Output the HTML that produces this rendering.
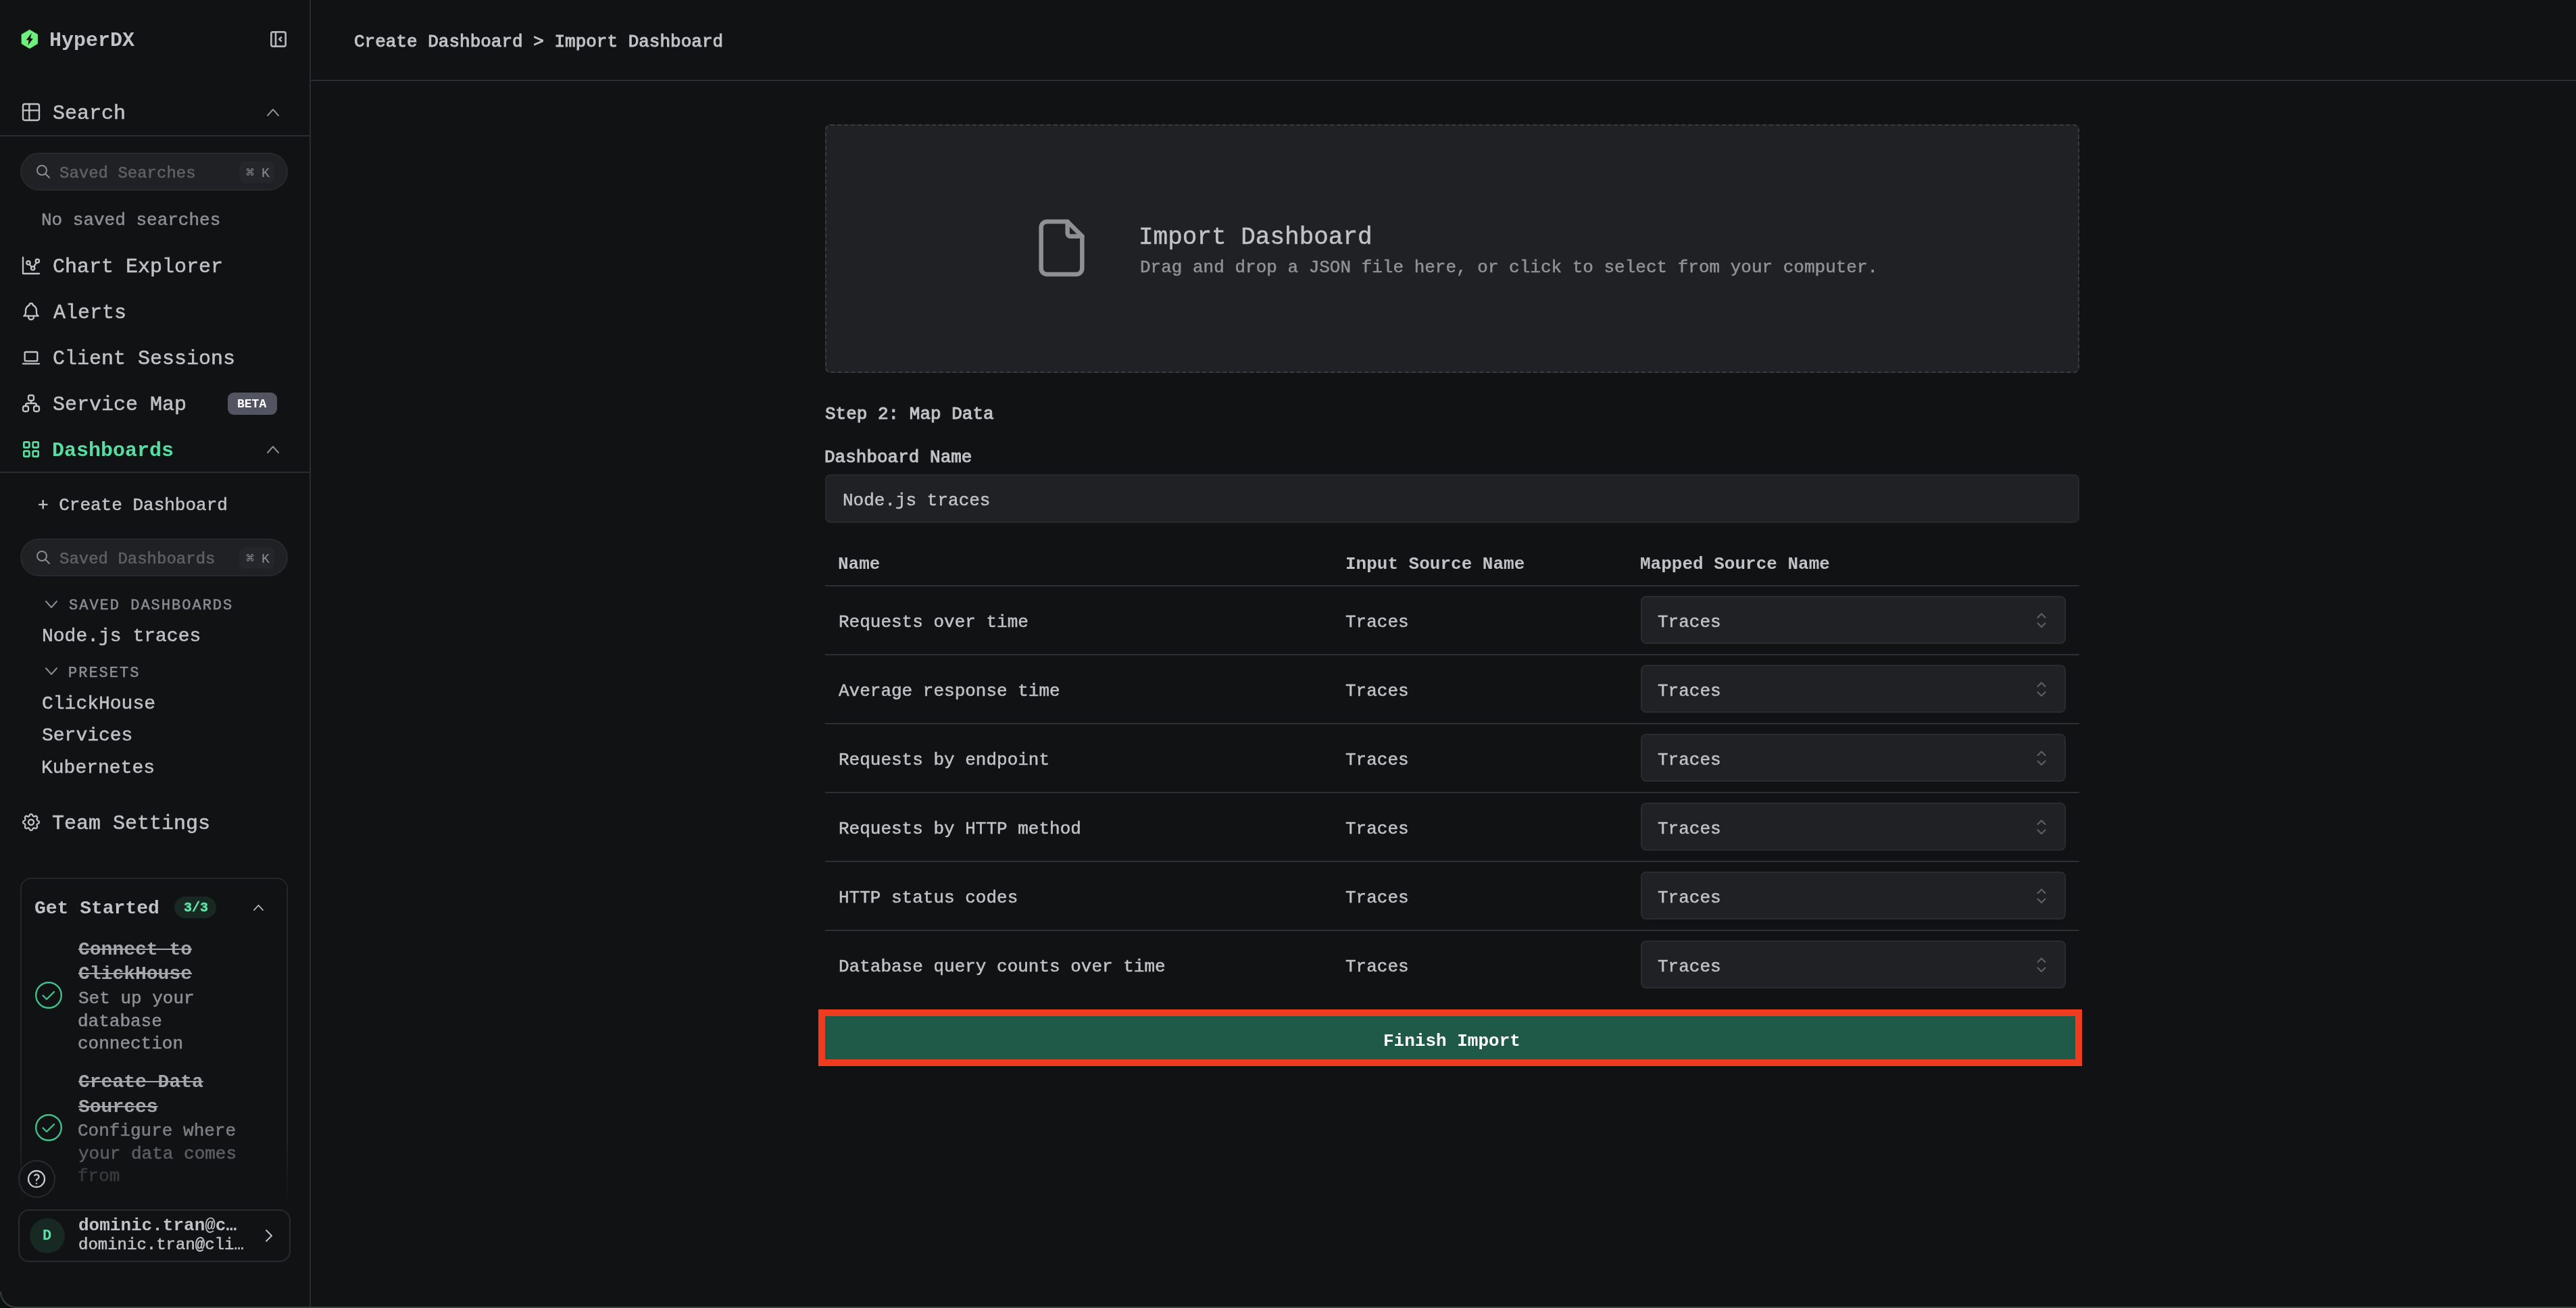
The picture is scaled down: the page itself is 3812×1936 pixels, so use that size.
<!DOCTYPE html>
<html><head><meta charset="utf-8"><title>HyperDX - Import Dashboard</title>
<style>
html,body{margin:0;padding:0;}
body{width:3812px;height:1936px;background:#111214;position:relative;overflow:hidden;font-family:"Liberation Mono",monospace;}
.t{position:absolute;white-space:pre;will-change:transform;}
.b{position:absolute;}
@media (max-width:2400px){html{zoom:0.5;}}
</style></head><body>
<div class="b" style="left:458px;top:0px;width:2px;height:1936px;background:#2b2c30"></div>
<div class="b" style="left:460px;top:118px;width:3352px;height:2px;background:#2b2c30"></div>
<svg class="b" style="left:26px;top:40px;" width="36" height="36" viewBox="0 0 36 36" fill="none" stroke-linecap="round" stroke-linejoin="round"><path d="M17.85 3.9 L29.9 10.95 V24.65 L17.85 31.9 L5.8 24.85 V11.05 Z" fill="#6fef7e" stroke="#6fef7e" stroke-width="0.3"/><path d="M20.9 8.8 L12.7 19.3 L16.6 19.6 L15.3 27.2 L22.8 17.2 L18.9 16.6 Z" fill="#111214" stroke="none"/></svg>
<div class="t" style="left:73.0px;top:43px;font-size:30px;line-height:34px;color:#c1c2c5;font-weight:700;">HyperDX</div>
<svg class="b" style="left:396px;top:42px;" width="32" height="32" viewBox="0 0 24 24" fill="none" stroke-linecap="round" stroke-linejoin="round"><g stroke="#b4b5bb" stroke-width="2"><rect x="4" y="4" width="16" height="16" rx="2"/><path d="M9 4v16"/><path d="M15 10l-2 2l2 2"/></g></svg>
<svg class="b" style="left:30px;top:150px;" width="32" height="32" viewBox="0 0 24 24" fill="none" stroke-linecap="round" stroke-linejoin="round"><g stroke="#c1c2c5" stroke-width="1.75"><rect x="3" y="3" width="18" height="18" rx="2"/><path d="M3 10h18"/><path d="M10 3v18"/></g></svg>
<div class="t" style="left:77.8px;top:151px;font-size:30px;line-height:34px;color:#c1c2c5;-webkit-text-stroke:0.5px #c1c2c5;">Search</div>
<svg class="b" style="left:394.0px;top:159.5px;" width="20" height="13" viewBox="0 0 20 13" fill="none" stroke-linecap="round" stroke-linejoin="round"><path d="M2 11 L10.0 2 L18 11" stroke="#8b8d93" stroke-width="2"/></svg>
<div class="b" style="left:0px;top:200px;width:458px;height:2px;background:#2b2c30"></div>
<div class="b" style="left:30px;top:226px;width:396px;height:56px;background:#202125;border:2px solid #28292d;border-radius:28px;box-sizing:border-box"></div>
<svg class="b" style="left:52px;top:242px;" width="24" height="24" viewBox="0 0 24 24" fill="none" stroke-linecap="round" stroke-linejoin="round"><g stroke="#8b8d93" stroke-width="2"><circle cx="10" cy="10" r="7"/><path d="M21 21l-6-6"/></g></svg>
<div class="t" style="left:88.1px;top:243px;font-size:24px;line-height:27px;color:#5f6167;-webkit-text-stroke:0.5px #5f6167;">Saved Searches</div>
<div class="b" style="left:354px;top:239px;width:52px;height:32px;background:#25262b;border-radius:8px"></div>
<div class="t" style="left:364.0px;top:245px;font-size:20px;line-height:23px;color:#8b8d93;font-family:"Liberation Sans",sans-serif;">⌘</div>
<div class="t" style="left:387.4px;top:245px;font-size:20px;line-height:23px;color:#8b8d93;font-family:"Liberation Sans",sans-serif;">K</div>
<div class="t" style="left:61.4px;top:311px;font-size:26px;line-height:30px;color:#8d8f94;-webkit-text-stroke:0.5px #8d8f94;">No saved searches</div>
<svg class="b" style="left:30px;top:377px;" width="32" height="32" viewBox="0 0 24 24" fill="none" stroke-linecap="round" stroke-linejoin="round"><g stroke="#c1c2c5" stroke-width="1.75"><path d="M3 3v18h18"/><circle cx="9" cy="9" r="2"/><circle cx="19" cy="7" r="2"/><circle cx="14" cy="15" r="2"/><path d="M10.16 10.62l2.34 2.88"/><path d="M15.088 13.328l2.837-4.586"/></g></svg>
<div class="t" style="left:77.9px;top:378px;font-size:30px;line-height:34px;color:#c1c2c5;-webkit-text-stroke:0.5px #c1c2c5;">Chart Explorer</div>
<svg class="b" style="left:30px;top:445px;" width="32" height="32" viewBox="0 0 24 24" fill="none" stroke-linecap="round" stroke-linejoin="round"><g stroke="#c1c2c5" stroke-width="1.75"><path d="M10 5a2 2 0 1 1 4 0a7 7 0 0 1 4 6v3a4 4 0 0 0 2 3h-16a4 4 0 0 0 2-3v-3a7 7 0 0 1 4-6"/><path d="M9 17v1a3 3 0 0 0 6 0v-1"/></g></svg>
<div class="t" style="left:78.6px;top:446px;font-size:30px;line-height:34px;color:#c1c2c5;-webkit-text-stroke:0.5px #c1c2c5;">Alerts</div>
<svg class="b" style="left:30px;top:513px;" width="32" height="32" viewBox="0 0 24 24" fill="none" stroke-linecap="round" stroke-linejoin="round"><g stroke="#c1c2c5" stroke-width="1.75"><path d="M3 19l18 0"/><path d="M5 7a1 1 0 0 1 1-1h12a1 1 0 0 1 1 1v8a1 1 0 0 1-1 1h-12a1 1 0 0 1-1-1z"/></g></svg>
<div class="t" style="left:77.9px;top:514px;font-size:30px;line-height:34px;color:#c1c2c5;-webkit-text-stroke:0.5px #c1c2c5;">Client Sessions</div>
<svg class="b" style="left:30px;top:581px;" width="32" height="32" viewBox="0 0 24 24" fill="none" stroke-linecap="round" stroke-linejoin="round"><g stroke="#c1c2c5" stroke-width="1.75"><path d="M3 17a2 2 0 0 1 2-2h2a2 2 0 0 1 2 2v2a2 2 0 0 1-2 2h-2a2 2 0 0 1-2-2z"/><path d="M15 17a2 2 0 0 1 2-2h2a2 2 0 0 1 2 2v2a2 2 0 0 1-2 2h-2a2 2 0 0 1-2-2z"/><path d="M9 5a2 2 0 0 1 2-2h2a2 2 0 0 1 2 2v2a2 2 0 0 1-2 2h-2a2 2 0 0 1-2-2z"/><path d="M6 15v-1a2 2 0 0 1 2-2h8a2 2 0 0 1 2 2v1"/><path d="M12 9l0 3"/></g></svg>
<div class="t" style="left:77.7px;top:582px;font-size:30px;line-height:34px;color:#c1c2c5;-webkit-text-stroke:0.5px #c1c2c5;">Service Map</div>
<div class="b" style="left:337px;top:581px;width:73px;height:33px;background:#525462;border-radius:9px"></div>
<div class="t" style="left:351.3px;top:588px;font-size:18px;line-height:20px;color:#ffffff;font-weight:700;font-family:"Liberation Sans",sans-serif;">BETA</div>
<svg class="b" style="left:30px;top:649px;" width="32" height="32" viewBox="0 0 24 24" fill="none" stroke-linecap="round" stroke-linejoin="round"><g stroke="#56dea2" stroke-width="2"><rect x="4" y="4" width="6" height="6" rx="1"/><rect x="14" y="4" width="6" height="6" rx="1"/><rect x="4" y="14" width="6" height="6" rx="1"/><rect x="14" y="14" width="6" height="6" rx="1"/></g></svg>
<div class="t" style="left:76.9px;top:650px;font-size:30px;line-height:34px;color:#56dea2;font-weight:700;">Dashboards</div>
<svg class="b" style="left:394.0px;top:658.5px;" width="20" height="13" viewBox="0 0 20 13" fill="none" stroke-linecap="round" stroke-linejoin="round"><path d="M2 11 L10.0 2 L18 11" stroke="#8b8d93" stroke-width="2"/></svg>
<div class="b" style="left:0px;top:698px;width:458px;height:2px;background:#2b2c30"></div>
<div class="t" style="left:55.5px;top:733px;font-size:26px;line-height:30px;color:#c1c2c5;-webkit-text-stroke:0.5px #c1c2c5;">+ Create Dashboard</div>
<div class="b" style="left:30px;top:797px;width:396px;height:56px;background:#202125;border:2px solid #28292d;border-radius:28px;box-sizing:border-box"></div>
<svg class="b" style="left:52px;top:813px;" width="24" height="24" viewBox="0 0 24 24" fill="none" stroke-linecap="round" stroke-linejoin="round"><g stroke="#8b8d93" stroke-width="2"><circle cx="10" cy="10" r="7"/><path d="M21 21l-6-6"/></g></svg>
<div class="t" style="left:87.8px;top:814px;font-size:24px;line-height:27px;color:#5f6167;-webkit-text-stroke:0.5px #5f6167;">Saved Dashboards</div>
<div class="b" style="left:354px;top:810px;width:52px;height:32px;background:#25262b;border-radius:8px"></div>
<div class="t" style="left:364.0px;top:816px;font-size:20px;line-height:23px;color:#8b8d93;font-family:"Liberation Sans",sans-serif;">⌘</div>
<div class="t" style="left:387.4px;top:816px;font-size:20px;line-height:23px;color:#8b8d93;font-family:"Liberation Sans",sans-serif;">K</div>
<svg class="b" style="left:66.0px;top:887.5px;" width="20" height="13" viewBox="0 0 20 13" fill="none" stroke-linecap="round" stroke-linejoin="round"><path d="M2 2 L10.0 11 L18 2" stroke="#8b8d93" stroke-width="2"/></svg>
<div class="t" style="left:101.6px;top:884px;font-size:22px;line-height:25px;color:#8b8d93;-webkit-text-stroke:0.5px #8b8d93;letter-spacing:2px;">SAVED DASHBOARDS</div>
<div class="t" style="left:61.6px;top:926px;font-size:28px;line-height:31px;color:#c1c2c5;-webkit-text-stroke:0.5px #c1c2c5;">Node.js traces</div>
<svg class="b" style="left:66.0px;top:987.0px;" width="20" height="13" viewBox="0 0 20 13" fill="none" stroke-linecap="round" stroke-linejoin="round"><path d="M2 2 L10.0 11 L18 2" stroke="#8b8d93" stroke-width="2"/></svg>
<div class="t" style="left:100.7px;top:984px;font-size:22px;line-height:25px;color:#8b8d93;-webkit-text-stroke:0.5px #8b8d93;letter-spacing:2px;">PRESETS</div>
<div class="t" style="left:61.5px;top:1026px;font-size:28px;line-height:31px;color:#c1c2c5;-webkit-text-stroke:0.5px #c1c2c5;">ClickHouse</div>
<div class="t" style="left:61.9px;top:1073px;font-size:28px;line-height:31px;color:#c1c2c5;-webkit-text-stroke:0.5px #c1c2c5;">Services</div>
<div class="t" style="left:60.8px;top:1121px;font-size:28px;line-height:31px;color:#c1c2c5;-webkit-text-stroke:0.5px #c1c2c5;">Kubernetes</div>
<svg class="b" style="left:30px;top:1201px;" width="32" height="32" viewBox="0 0 24 24" fill="none" stroke-linecap="round" stroke-linejoin="round"><g stroke="#c1c2c5" stroke-width="1.75"><path d="M10.325 4.317c.426-1.756 2.924-1.756 3.35 0a1.724 1.724 0 0 0 2.573 1.066c1.543-.94 3.31.826 2.37 2.37a1.724 1.724 0 0 0 1.065 2.572c1.756.426 1.756 2.924 0 3.35a1.724 1.724 0 0 0-1.066 2.573c.94 1.543-.826 3.31-2.37 2.37a1.724 1.724 0 0 0-2.572 1.065c-.426 1.756-2.924 1.756-3.35 0a1.724 1.724 0 0 0-2.573-1.066c-1.543.94-3.31-.826-2.37-2.37a1.724 1.724 0 0 0-1.065-2.572c-1.756-.426-1.756-2.924 0-3.35a1.724 1.724 0 0 0 1.066-2.573c-.94-1.543.826-3.31 2.37-2.37c1 .608 2.296.07 2.572-1.065z"/><path d="M9 12a3 3 0 1 0 6 0a3 3 0 0 0-6 0"/></g></svg>
<div class="t" style="left:77.2px;top:1202px;font-size:30px;line-height:34px;color:#c1c2c5;-webkit-text-stroke:0.5px #c1c2c5;">Team Settings</div>
<div class="b" style="left:30px;top:1299px;width:396px;height:520px;border:2px solid #26272b;border-bottom:none;border-radius:16px 16px 0 0;box-sizing:border-box;-webkit-mask-image:linear-gradient(to bottom,#000 0,#000 380px,transparent 490px)"></div>
<div class="t" style="left:51.3px;top:1329px;font-size:28px;line-height:31px;color:#c1c2c5;font-weight:700;">Get Started</div>
<div class="b" style="left:258px;top:1327px;width:62px;height:32px;background:#182822;border-radius:16px"></div>
<div class="t" style="left:271.6px;top:1332px;font-size:20px;line-height:23px;color:#62e4aa;font-weight:700;-webkit-text-stroke:0.4px #62e4aa;">3/3</div>
<svg class="b" style="left:373.5px;top:1337.5px;" width="17" height="11" viewBox="0 0 17 11" fill="none" stroke-linecap="round" stroke-linejoin="round"><path d="M2 9 L8.5 2 L15 9" stroke="#c1c2c5" stroke-width="1.8"/></svg>
<svg class="b" style="left:52px;top:1453px;" width="40" height="40" viewBox="0 0 40 40" fill="none" stroke-linecap="round" stroke-linejoin="round"><circle cx="20" cy="20" r="18.8" stroke="#3fc08a" stroke-width="2.4"/><path d="M11.5 20.5 L17 26 L28 15" stroke="#3fc08a" stroke-width="2.4"/></svg>
<div class="t" style="left:115.5px;top:1390px;font-size:28px;line-height:31px;color:#a5a7ab;font-weight:700;text-decoration:line-through;">Connect to</div>
<div class="t" style="left:115.5px;top:1426px;font-size:28px;line-height:31px;color:#a5a7ab;font-weight:700;text-decoration:line-through;">ClickHouse</div>
<div class="t" style="left:115.6px;top:1463px;font-size:26px;line-height:30px;color:#8f9196;-webkit-text-stroke:0.5px #8f9196;">Set up your</div>
<div class="t" style="left:114.8px;top:1497px;font-size:26px;line-height:30px;color:#8f9196;-webkit-text-stroke:0.5px #8f9196;">database</div>
<div class="t" style="left:114.9px;top:1530px;font-size:26px;line-height:30px;color:#8f9196;-webkit-text-stroke:0.5px #8f9196;">connection</div>
<svg class="b" style="left:52px;top:1649px;" width="40" height="40" viewBox="0 0 40 40" fill="none" stroke-linecap="round" stroke-linejoin="round"><circle cx="20" cy="20" r="18.8" stroke="#3fc08a" stroke-width="2.4"/><path d="M11.5 20.5 L17 26 L28 15" stroke="#3fc08a" stroke-width="2.4"/></svg>
<div class="t" style="left:115.6px;top:1586px;font-size:28px;line-height:31px;color:#a5a7ab;font-weight:700;text-decoration:line-through;">Create Data</div>
<div class="t" style="left:116.2px;top:1623px;font-size:28px;line-height:31px;color:#a5a7ab;font-weight:700;text-decoration:line-through;">Sources</div>
<div class="t" style="left:115.3px;top:1659px;font-size:26px;line-height:30px;color:#7d7f84;-webkit-text-stroke:0.5px #7d7f84;">Configure where</div>
<div class="t" style="left:115.9px;top:1693px;font-size:26px;line-height:30px;color:#5d5f63;-webkit-text-stroke:0.5px #5d5f63;">your data comes</div>
<div class="t" style="left:114.9px;top:1726px;font-size:26px;line-height:30px;color:#3a3b3e;-webkit-text-stroke:0.5px #3a3b3e;">from</div>
<div class="b" style="left:27px;top:1717px;width:55px;height:56px;background:#111214;border:2px solid #2a2b2f;border-radius:50%;box-sizing:border-box"></div>
<svg class="b" style="left:38px;top:1729px;" width="32" height="32" viewBox="0 0 24 24" fill="none" stroke-linecap="round" stroke-linejoin="round"><g stroke="#c9cacd" stroke-width="1.75"><circle cx="12" cy="12" r="9"/><path d="M12 17l0 .01"/><path d="M12 13.5a1.5 1.5 0 0 1 1-1.5a2.6 2.6 0 1 0-3-4"/></g></svg>
<div class="b" style="left:27px;top:1790px;width:403px;height:78px;border:2px solid #2a2b2f;border-radius:16px;box-sizing:border-box"></div>
<div class="b" style="left:44px;top:1803px;width:52px;height:52px;background:#182822;border-radius:50%"></div>
<div class="t" style="left:62.5px;top:1817px;font-size:22px;line-height:25px;color:#5fe0a6;font-weight:700;">D</div>
<div class="t" style="left:115.5px;top:1799px;font-size:26px;line-height:30px;color:#c1c2c5;font-weight:700;">dominic.tran@c…</div>
<div class="t" style="left:115.9px;top:1829px;font-size:24px;line-height:27px;color:#c1c2c5;-webkit-text-stroke:0.5px #c1c2c5;">dominic.tran@cli…</div>
<svg class="b" style="left:390px;top:1818px;" width="16" height="22" viewBox="0 0 16 22" fill="none" stroke-linecap="round" stroke-linejoin="round"><path d="M4 3 L12 11 L4 19" stroke="#c1c2c5" stroke-width="2"/></svg>
<div class="b" style="left:0px;top:1934px;width:3812px;height:2px;background:#3d3e40"></div>
<svg class="b" style="left:0px;top:1900px;" width="40" height="36" viewBox="0 0 40 36" fill="none" stroke-linecap="round" stroke-linejoin="round"><path d="M0 12 A24 24 0 0 0 24 36 H0 Z" fill="#0a120c" stroke="none"/><path d="M1 12 A23 23 0 0 0 24 35 H40" stroke="#3d3e40" stroke-width="2" stroke-linecap="butt"/></svg>
<div class="t" style="left:523.6px;top:47px;font-size:26px;line-height:30px;color:#c1c2c5;-webkit-text-stroke:1.0px #c1c2c5;">Create Dashboard &gt; Import Dashboard</div>
<div class="b" style="left:1221px;top:184px;width:1856px;height:368px;background:#202125;border:2px dashed #3a3b40;border-radius:8px;box-sizing:border-box"></div>
<svg class="b" style="left:1518.6px;top:315.3px;" width="104" height="104" viewBox="0 0 24 24" fill="none" stroke-linecap="round" stroke-linejoin="round"><g stroke="#8f9094" stroke-width="1.5"><path d="M14 3v4a1 1 0 0 0 1 1h4"/><path d="M17 21h-10a2 2 0 0 1-2-2v-14a2 2 0 0 1 2-2h7l5 5v11a2 2 0 0 1-2 2z"/></g></svg>
<div class="t" style="left:1685.4px;top:331px;font-size:36px;line-height:41px;color:#c1c2c5;-webkit-text-stroke:0.5px #c1c2c5;">Import Dashboard</div>
<div class="t" style="left:1686.9px;top:381px;font-size:26px;line-height:30px;color:#909296;-webkit-text-stroke:0.5px #909296;">Drag and drop a JSON file here, or click to select from your computer.</div>
<div class="t" style="left:1221.0px;top:598px;font-size:26px;line-height:30px;color:#c1c2c5;-webkit-text-stroke:1.0px #c1c2c5;">Step 2: Map Data</div>
<div class="t" style="left:1220.4px;top:662px;font-size:26px;line-height:30px;color:#c1c2c5;-webkit-text-stroke:1.0px #c1c2c5;">Dashboard Name</div>
<div class="b" style="left:1221px;top:702px;width:1856px;height:72px;background:#202125;border:2px solid #27282c;border-radius:8px;box-sizing:border-box"></div>
<div class="t" style="left:1246.9px;top:726px;font-size:26px;line-height:30px;color:#c1c2c5;-webkit-text-stroke:0.5px #c1c2c5;">Node.js traces</div>
<div class="t" style="left:1240.3px;top:820px;font-size:26px;line-height:30px;color:#c1c2c5;font-weight:700;">Name</div>
<div class="t" style="left:1990.5px;top:820px;font-size:26px;line-height:30px;color:#c1c2c5;font-weight:700;">Input Source Name</div>
<div class="t" style="left:2427.2px;top:820px;font-size:26px;line-height:30px;color:#c1c2c5;font-weight:700;">Mapped Source Name</div>
<div class="b" style="left:1221px;top:866px;width:1856px;height:2px;background:#2e2f34"></div>
<div class="t" style="left:1240.9px;top:906px;font-size:26px;line-height:30px;color:#c1c2c5;-webkit-text-stroke:0.5px #c1c2c5;">Requests over time</div>
<div class="t" style="left:1990.5px;top:906px;font-size:26px;line-height:30px;color:#c1c2c5;-webkit-text-stroke:0.5px #c1c2c5;">Traces</div>
<div class="b" style="left:2428px;top:882px;width:629px;height:71px;background:#202125;border:2px solid #2a2b30;border-radius:8px;box-sizing:border-box"></div>
<div class="t" style="left:2453.2px;top:906px;font-size:26px;line-height:30px;color:#c1c2c5;-webkit-text-stroke:0.5px #c1c2c5;">Traces</div>
<svg class="b" style="left:3009px;top:902px;" width="24" height="32" viewBox="0 0 24 32" fill="none" stroke-linecap="round" stroke-linejoin="round"><path d="M6.5 12 L12 6.5 L17.5 12" stroke="#5d5f67" stroke-width="2.2"/><path d="M6.5 20.5 L12 26 L17.5 20.5" stroke="#5d5f67" stroke-width="2.2"/></svg>
<div class="b" style="left:1221px;top:968px;width:1856px;height:2px;background:#2e2f34"></div>
<div class="t" style="left:1240.9px;top:1008px;font-size:26px;line-height:30px;color:#c1c2c5;-webkit-text-stroke:0.5px #c1c2c5;">Average response time</div>
<div class="t" style="left:1990.5px;top:1008px;font-size:26px;line-height:30px;color:#c1c2c5;-webkit-text-stroke:0.5px #c1c2c5;">Traces</div>
<div class="b" style="left:2428px;top:984px;width:629px;height:71px;background:#202125;border:2px solid #2a2b30;border-radius:8px;box-sizing:border-box"></div>
<div class="t" style="left:2453.2px;top:1008px;font-size:26px;line-height:30px;color:#c1c2c5;-webkit-text-stroke:0.5px #c1c2c5;">Traces</div>
<svg class="b" style="left:3009px;top:1004px;" width="24" height="32" viewBox="0 0 24 32" fill="none" stroke-linecap="round" stroke-linejoin="round"><path d="M6.5 12 L12 6.5 L17.5 12" stroke="#5d5f67" stroke-width="2.2"/><path d="M6.5 20.5 L12 26 L17.5 20.5" stroke="#5d5f67" stroke-width="2.2"/></svg>
<div class="b" style="left:1221px;top:1070px;width:1856px;height:2px;background:#2e2f34"></div>
<div class="t" style="left:1240.9px;top:1110px;font-size:26px;line-height:30px;color:#c1c2c5;-webkit-text-stroke:0.5px #c1c2c5;">Requests by endpoint</div>
<div class="t" style="left:1990.5px;top:1110px;font-size:26px;line-height:30px;color:#c1c2c5;-webkit-text-stroke:0.5px #c1c2c5;">Traces</div>
<div class="b" style="left:2428px;top:1086px;width:629px;height:71px;background:#202125;border:2px solid #2a2b30;border-radius:8px;box-sizing:border-box"></div>
<div class="t" style="left:2453.2px;top:1110px;font-size:26px;line-height:30px;color:#c1c2c5;-webkit-text-stroke:0.5px #c1c2c5;">Traces</div>
<svg class="b" style="left:3009px;top:1106px;" width="24" height="32" viewBox="0 0 24 32" fill="none" stroke-linecap="round" stroke-linejoin="round"><path d="M6.5 12 L12 6.5 L17.5 12" stroke="#5d5f67" stroke-width="2.2"/><path d="M6.5 20.5 L12 26 L17.5 20.5" stroke="#5d5f67" stroke-width="2.2"/></svg>
<div class="b" style="left:1221px;top:1172px;width:1856px;height:2px;background:#2e2f34"></div>
<div class="t" style="left:1240.9px;top:1212px;font-size:26px;line-height:30px;color:#c1c2c5;-webkit-text-stroke:0.5px #c1c2c5;">Requests by HTTP method</div>
<div class="t" style="left:1990.5px;top:1212px;font-size:26px;line-height:30px;color:#c1c2c5;-webkit-text-stroke:0.5px #c1c2c5;">Traces</div>
<div class="b" style="left:2428px;top:1188px;width:629px;height:71px;background:#202125;border:2px solid #2a2b30;border-radius:8px;box-sizing:border-box"></div>
<div class="t" style="left:2453.2px;top:1212px;font-size:26px;line-height:30px;color:#c1c2c5;-webkit-text-stroke:0.5px #c1c2c5;">Traces</div>
<svg class="b" style="left:3009px;top:1208px;" width="24" height="32" viewBox="0 0 24 32" fill="none" stroke-linecap="round" stroke-linejoin="round"><path d="M6.5 12 L12 6.5 L17.5 12" stroke="#5d5f67" stroke-width="2.2"/><path d="M6.5 20.5 L12 26 L17.5 20.5" stroke="#5d5f67" stroke-width="2.2"/></svg>
<div class="b" style="left:1221px;top:1274px;width:1856px;height:2px;background:#2e2f34"></div>
<div class="t" style="left:1240.9px;top:1314px;font-size:26px;line-height:30px;color:#c1c2c5;-webkit-text-stroke:0.5px #c1c2c5;">HTTP status codes</div>
<div class="t" style="left:1990.5px;top:1314px;font-size:26px;line-height:30px;color:#c1c2c5;-webkit-text-stroke:0.5px #c1c2c5;">Traces</div>
<div class="b" style="left:2428px;top:1290px;width:629px;height:71px;background:#202125;border:2px solid #2a2b30;border-radius:8px;box-sizing:border-box"></div>
<div class="t" style="left:2453.2px;top:1314px;font-size:26px;line-height:30px;color:#c1c2c5;-webkit-text-stroke:0.5px #c1c2c5;">Traces</div>
<svg class="b" style="left:3009px;top:1310px;" width="24" height="32" viewBox="0 0 24 32" fill="none" stroke-linecap="round" stroke-linejoin="round"><path d="M6.5 12 L12 6.5 L17.5 12" stroke="#5d5f67" stroke-width="2.2"/><path d="M6.5 20.5 L12 26 L17.5 20.5" stroke="#5d5f67" stroke-width="2.2"/></svg>
<div class="b" style="left:1221px;top:1376px;width:1856px;height:2px;background:#2e2f34"></div>
<div class="t" style="left:1240.9px;top:1416px;font-size:26px;line-height:30px;color:#c1c2c5;-webkit-text-stroke:0.5px #c1c2c5;">Database query counts over time</div>
<div class="t" style="left:1990.5px;top:1416px;font-size:26px;line-height:30px;color:#c1c2c5;-webkit-text-stroke:0.5px #c1c2c5;">Traces</div>
<div class="b" style="left:2428px;top:1392px;width:629px;height:71px;background:#202125;border:2px solid #2a2b30;border-radius:8px;box-sizing:border-box"></div>
<div class="t" style="left:2453.2px;top:1416px;font-size:26px;line-height:30px;color:#c1c2c5;-webkit-text-stroke:0.5px #c1c2c5;">Traces</div>
<svg class="b" style="left:3009px;top:1412px;" width="24" height="32" viewBox="0 0 24 32" fill="none" stroke-linecap="round" stroke-linejoin="round"><path d="M6.5 12 L12 6.5 L17.5 12" stroke="#5d5f67" stroke-width="2.2"/><path d="M6.5 20.5 L12 26 L17.5 20.5" stroke="#5d5f67" stroke-width="2.2"/></svg>
<div class="b" style="left:1221px;top:1376px;width:1856px;height:2px;background:#2e2f34"></div>
<div class="b" style="left:1221px;top:1504px;width:1856px;height:64px;background:#1f5a48"></div>
<div class="t" style="left:2046.5px;top:1526px;font-size:26px;line-height:30px;color:#ffffff;font-weight:700;">Finish Import</div>
<div class="b" style="left:1211px;top:1494px;width:1870px;height:84px;border:10px solid #ef3b1f;box-sizing:border-box"></div>
</body></html>
